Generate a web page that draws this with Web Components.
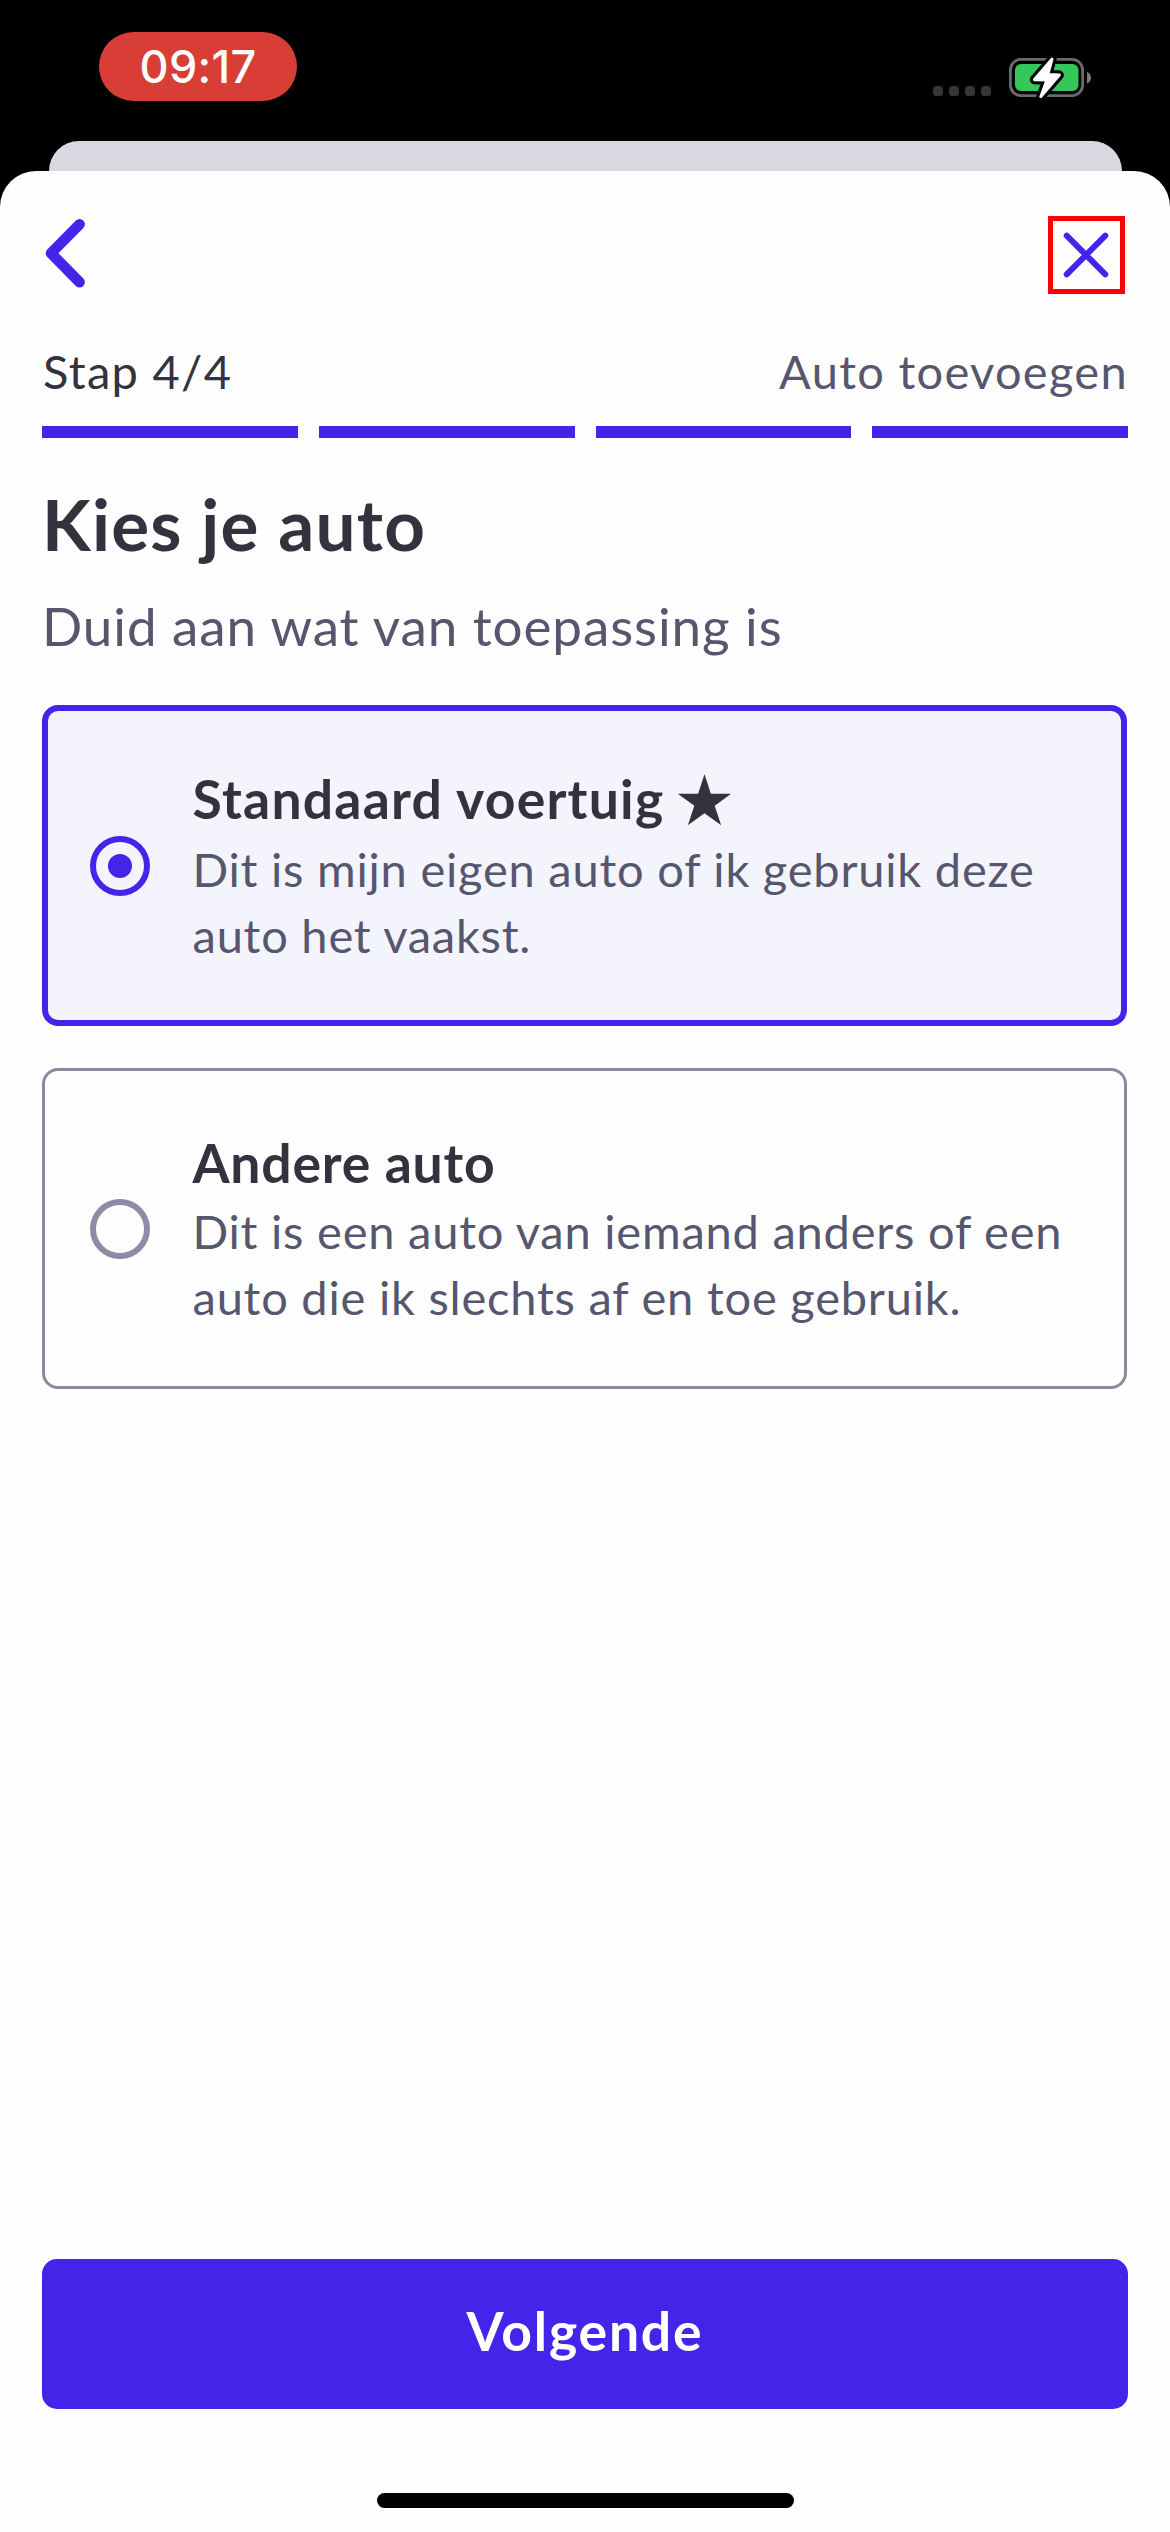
<!DOCTYPE html>
<html lang="nl">
<head>
<meta charset="utf-8">
<title>Kies je auto</title>
<style>
  body { margin: 0; background: #000; font-family: Lato, "Open Sans", sans-serif; }
</style>
</head>
<body>
<phone-screen>
  <status-bar slot="status" time="09:17"></status-bar>
  <nav-bar></nav-bar>
  <step-progress step="4" total="4" label="Auto toevoegen"></step-progress>
  <page-heading>
    <span slot="title">Kies je auto</span>
    <span slot="subtitle">Duid aan wat van toepassing is</span>
  </page-heading>
  <radio-card checked star>
    <span slot="title">Standaard voertuig</span>
    Dit is mijn eigen auto of ik gebruik deze<br>auto het vaakst.
  </radio-card>
  <radio-card>
    <span slot="title">Andere auto</span>
    Dit is een auto van iemand anders of een<br>auto die ik slechts af en toe gebruik.
  </radio-card>
  <primary-button slot="footer">Volgende</primary-button>
</phone-screen>

<script>
const define = (name, render) => customElements.define(name, class extends HTMLElement {
  constructor() { super(); this.attachShadow({ mode: 'open' }); }
  connectedCallback() { this.shadowRoot.innerHTML = render(this); }
});

define('phone-screen', () => `
  <style>
    :host { display: flex; flex-direction: column; width: 1170px; height: 2532px; background: #000;
      --brand: #4524ea; --ink: #33323e; --muted: #57566f; }
    .behind { flex: none; height: 30px; margin: 0 48.5px; background: #d8d8e1; border-radius: 30px 30px 0 0; }
    .sheet { flex: 1; display: flex; flex-direction: column; box-sizing: border-box;
      background: #fefefe; border-radius: 36px 36px 0 0; padding: 45px 42px 24px; }
    .space { flex: 1; }
    .home { align-self: center; width: 417px; height: 15px; border-radius: 8px; background: #000; margin-top: 84px; }
  </style>
  <slot name="status"></slot>
  <div class="behind"></div>
  <div class="sheet">
    <slot></slot>
    <div class="space"></div>
    <slot name="footer"></slot>
    <div class="home"></div>
  </div>`);

define('status-bar', el => `
  <style>
    :host { display: flex; height: 141px; box-sizing: border-box; padding: 32px 78px 0 99px;
      justify-content: space-between; align-items: flex-start; }
    .time { width: 198px; height: 69px; border-radius: 34.5px; background: #d83e35; color: #fff;
      text-align: center; font: 500 45px/69px Inter, sans-serif; letter-spacing: .3px; }
    .right { display: flex; padding-top: 25px; }
    .dots { display: flex; gap: 6px; padding: 29px 18px 0 0; }
    .dots i { width: 10px; height: 10px; border-radius: 3.5px; background: #363636; }
    svg { display: block; }
  </style>
  <div class="time">${el.getAttribute('time')}</div>
  <div class="right">
    <div class="dots"><i></i><i></i><i></i><i></i></div>
    <svg width="83" height="42" viewBox="0 0 83 42" overflow="visible">
      <rect x="1.4" y="2.4" width="72.2" height="36.2" rx="10.5" fill="none" stroke="#6a696b" stroke-width="2.8"/>
      <path d="M78 15v11.400c2.600-1 4-3.200 4-5.700s-1.400-4.700-4-5.700z" fill="#7c7b7d"/>
      <rect x="6" y="7" width="63.500" height="27" rx="6" fill="#34c759"/>
      <g stroke-linejoin="round">
        <path d="M42.700 1.500 25 22.200Q24.600 23.200 25.600 23.300L37 23.700 31.200 39.800 32.300 40 50.800 18.500Q51.200 17.500 50.200 17.300L39.600 16.900 43.700 1.800z" fill="#000" stroke="#000" stroke-width="8"/>
        <path d="M42.700 1.500 25 22.200Q24.600 23.200 25.600 23.300L37 23.700 31.200 39.800 32.300 40 50.800 18.500Q51.200 17.500 50.200 17.300L39.600 16.900 43.700 1.800z" fill="#fff" stroke="#fff" stroke-width="1.800"/>
      </g>
    </svg>
  </div>`);

define('nav-bar', () => `
  <style>
    :host { display: flex; justify-content: space-between; align-items: flex-start; height: 78px; padding: 0 3px; }
    svg { display: block; }
    .back { padding-top: 3px; }
    .close { display: flex; box-sizing: border-box; width: 77.500px; height: 77.500px; border: 5px solid #fb0007;
      align-items: center; justify-content: center; }
  </style>
  <svg class="back" width="40" height="72" viewBox="0 0 40 72"><path d="M34.600 5.300 6 34.200 34.600 63.300" fill="none" stroke="#4524ea" stroke-width="10.600" stroke-linecap="round" stroke-linejoin="round"/></svg>
  <div class="close">
    <svg width="46" height="46" viewBox="0 0 46 46"><path d="M3.700 3.700 42.300 42.300M42.300 3.700 3.700 42.300" fill="none" stroke="#4524ea" stroke-width="6" stroke-linecap="round"/></svg>
  </div>`);

define('step-progress', el => {
  const step = +el.getAttribute('step'), total = +el.getAttribute('total');
  return `
  <style>
    :host { display: block; padding-top: 47px; }
    .labels { display: flex; justify-content: space-between; padding: 0 0 0 1px;
      font-size: 47px; line-height: 60px; letter-spacing: 1.3px; color: var(--ink); }
    .labels .flow { color: var(--muted); }
    .bars { display: flex; gap: 21px; margin-top: 25px; }
    .bars i { flex: 1; height: 12px; background: #d8d8e1; }
    .bars i.on { background: var(--brand); }
  </style>
  <div class="labels"><span>Stap ${step}/${total}</span><span class="flow">${el.getAttribute('label')}</span></div>
  <div class="bars">${Array.from({ length: total }, (_, i) => `<i class="${i < step ? 'on' : ''}"></i>`).join('')}</div>`;
});

define('page-heading', () => `
  <style>
    :host { display: block; padding: 43.500px 0 46.500px; }
    .t { font-size: 71px; line-height: 84px; font-weight: 700; letter-spacing: 1.250px; color: var(--ink); }
    .s { margin-top: 27px; font-size: 53px; line-height: 66px; letter-spacing: .920px; color: var(--muted); }
  </style>
  <div class="t"><slot name="title"></slot></div>
  <div class="s"><slot name="subtitle"></slot></div>`);

define('radio-card', el => `
  <style>
    :host { display: flex; box-sizing: border-box; width: 1085px; height: 320.500px; border-radius: 16px;
      border: 3px solid #8b899c; padding: 58px 24px 0 45px; gap: 42.500px; margin-bottom: 42.500px; }
    :host([checked]) { border: 6px solid var(--brand); background: #f4f4fd; padding: 53.500px 21px 0 42px; }
    .radio { flex: none; box-sizing: border-box; width: 60px; height: 60px; border-radius: 50%; margin-top: 70px;
      border: 6px solid #8d8ba5; display: flex; align-items: center; justify-content: center; }
    :host([checked]) .radio { border-color: var(--brand); margin-top: 71.500px; }
    .dot { width: 24px; height: 24px; border-radius: 50%; background: var(--brand); }
    .title { display: flex; height: 66px; font-size: 53.500px; line-height: 66px; font-weight: 700;
      letter-spacing: .750px; color: var(--ink); white-space: nowrap; }
    :host([checked]) .title { letter-spacing: 1.220px; }
    .star { font: 400 57px/66px "Noto Sans CJK JP", sans-serif; letter-spacing: 0; margin: -2px 0 0 11.500px; }
    .desc { margin-top: 2.500px; font-size: 47px; line-height: 66px; letter-spacing: .780px; color: var(--muted); white-space: nowrap; }
    :host([checked]) .desc { margin-top: 5px; }
  </style>
  <div class="radio">${el.hasAttribute('checked') ? '<div class="dot"></div>' : ''}</div>
  <div>
    <div class="title"><slot name="title"></slot>${el.hasAttribute('star') ? '<span class="star">★</span>' : ''}</div>
    <div class="desc"><slot></slot></div>
  </div>`);

define('primary-button', () => `
  <style>
    :host { display: flex; box-sizing: border-box; height: 150px; border-radius: 15px; background: var(--brand);
      align-items: center; justify-content: center; padding-bottom: 9px;
      color: #fff; font-weight: 700; font-size: 53.500px; line-height: 66px; letter-spacing: 1.800px; }
  </style>
  <slot></slot>`);
</script>
</body>
</html>
